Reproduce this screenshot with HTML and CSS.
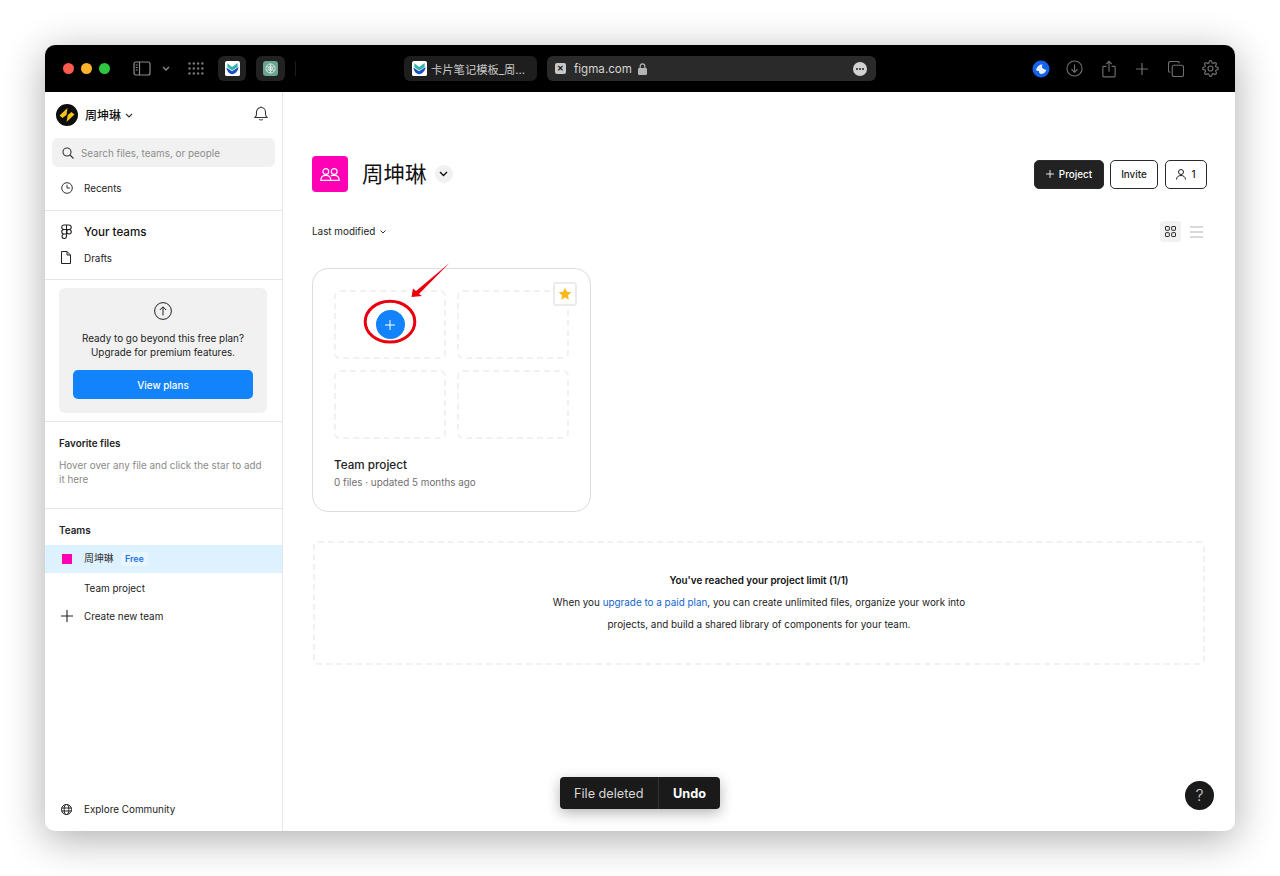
FILE: index.html
```html
<!DOCTYPE html>
<html>
<head>
<meta charset="utf-8">
<title>Figma</title>
<link rel="stylesheet" href="styles.css">
</head>
<body>
<svg class="defs" width="0" height="0">
  <symbol id="applogo" viewBox="0 0 16 16">
    <rect width="16" height="16" rx="2" fill="#fff"/>
    <path d="M2.500 2.500 L7.500 6.500 L13.500 2 V6.500 L7.500 10 L2.500 6.500Z" fill="#2fb6a8"/>
    <path d="M1.500 7 L7.500 11 L14.500 6.500 C14 11 11 14 7.500 14 C4.500 14 2 11 1.500 7Z" fill="#1d4fc4"/>
  </symbol>
</svg>
<div class="window">
  <header class="titlebar">
    <span class="light red"></span><span class="light yellow"></span><span class="light green"></span>
    <svg class="bar-icon sidebar-ico" width="18" height="15" viewBox="0 0 18 15" fill="none" stroke="#8c8c8c" stroke-width="1.2"><rect x="1" y="1" width="16" height="13" rx="2"/><path d="M6.500 1v13M2.700 4h2M2.700 6.500h2M2.700 9h2"/></svg>
    <svg class="bar-icon chev-ico" width="8" height="6" viewBox="0 0 8 6" fill="none" stroke="#8c8c8c" stroke-width="1.3"><path d="M1 1l3 3 3-3"/></svg>
    <svg class="bar-icon dots-ico" width="16" height="13" viewBox="0 0 16 13" fill="#777"><circle cx="1.500" cy="1.500" r="1.200"/><circle cx="5.800" cy="1.500" r="1.200"/><circle cx="10.100" cy="1.500" r="1.200"/><circle cx="14.400" cy="1.500" r="1.200"/><circle cx="1.500" cy="6.500" r="1.200"/><circle cx="5.800" cy="6.500" r="1.200"/><circle cx="10.100" cy="6.500" r="1.200"/><circle cx="14.400" cy="6.500" r="1.200"/><circle cx="1.500" cy="11.500" r="1.200"/><circle cx="5.800" cy="11.500" r="1.200"/><circle cx="10.100" cy="11.500" r="1.200"/><circle cx="14.400" cy="11.500" r="1.200"/></svg>
    <div class="app-tile first"><svg width="15" height="15"><use href="#applogo"/></svg></div>
    <div class="app-tile"><svg width="15" height="15" viewBox="0 0 15 15"><rect width="15" height="15" rx="3" fill="#6aa392"/><g fill="none" stroke="#d6e8e2" stroke-width="1"><circle cx="7.500" cy="7.500" r="4.600"/><circle cx="7.500" cy="7.500" r="2.200"/><path d="M7.500 2.900v4.600M3.500 5.200l4 2.300M3.500 9.800l4-2.300M7.500 12.100V7.500M11.500 9.800l-4-2.300M11.500 5.200l-4 2.300"/></g></svg></div>
    <span class="bar-sep"></span>
    <div class="tab"><svg width="15" height="15"><use href="#applogo"/></svg><span>卡片笔记模板_周...</span></div>
    <div class="address">
      <span class="favicon">✕</span>
      <span class="domain">figma.com</span>
      <svg class="lock" width="9" height="12" viewBox="0 0 9 12"><path d="M2.200 5V3.200a2.300 2.300 0 0 1 4.600 0V5" fill="none" stroke="#b5b5b5" stroke-width="1.200"/><rect y="5" width="9" height="7" rx="1.200" fill="#b5b5b5"/></svg>
      <span class="more"><i></i><i></i><i></i></span>
    </div>
    <div class="bar-right">
      <svg width="18" height="18" viewBox="0 0 18 18"><circle cx="9" cy="9" r="8.500" fill="#1463ec"/><path d="M4 10c1-4 4-6 7-5.500-1.500 1-1.500 2.500 0 4 1 1 2.500 1.500 3.500 1-1 3-3 4.500-5.500 4.500-1 0-2.500-1.500-2-3-1 0-2 0-3-1z" fill="#e8f0fd"/></svg>
      <svg width="17" height="17" viewBox="0 0 18 18" fill="none" stroke="#6f6f6f" stroke-width="1.200"><circle cx="9" cy="9" r="8"/><path d="M9 4.800v8M5.800 9.800L9 13l3.200-3.200"/></svg>
      <svg width="14" height="18" viewBox="0 0 16 20" fill="none" stroke="#6f6f6f" stroke-width="1.300"><path d="M5 7H2a1 1 0 0 0-1 1v10a1 1 0 0 0 1 1h12a1 1 0 0 0 1-1V8a1 1 0 0 0-1-1h-3M8 13V1.500M4.800 4.500L8 1.300l3.200 3.200"/></svg>
      <svg width="14" height="14" viewBox="0 0 14 14" fill="none" stroke="#6f6f6f" stroke-width="1.200"><path d="M7 1v12M1 7h12"/></svg>
      <svg width="16" height="16" viewBox="0 0 17 17" fill="none" stroke="#6f6f6f" stroke-width="1.200"><rect x="4.500" y="4.500" width="12" height="12" rx="2"/><path d="M12 2.500a2 2 0 0 0-2-2H2.500a2 2 0 0 0-2 2V10a2 2 0 0 0 2 2"/></svg>
      <svg width="17" height="17" viewBox="0 0 24 24" fill="none" stroke="#6f6f6f" stroke-width="1.700"><circle cx="12" cy="12" r="3.500"/><path d="M19.400 15a1.650 1.650 0 0 0 .33 1.820l.06.06a2 2 0 1 1-2.830 2.830l-.06-.06a1.650 1.650 0 0 0-2.820 1.170V21a2 2 0 0 1-4 0v-.09a1.650 1.650 0 0 0-2.820-1.170l-.06.06a2 2 0 1 1-2.830-2.830l.06-.06A1.650 1.650 0 0 0 3.090 14H3a2 2 0 0 1 0-4h.09a1.650 1.650 0 0 0 1.170-2.820l-.06-.06a2 2 0 1 1 2.830-2.830l.06.06A1.650 1.650 0 0 0 10 3.090V3a2 2 0 0 1 4 0v.09a1.650 1.650 0 0 0 2.820 1.170l.06-.06a2 2 0 1 1 2.830 2.830l-.06.06A1.650 1.650 0 0 0 20.910 10H21a2 2 0 0 1 0 4h-.09a1.650 1.650 0 0 0-1.510 1z"/></svg>
    </div>
  </header>

  <div class="body">
    <aside class="sidebar">
      <div class="user-row">
        <svg width="22" height="22" viewBox="0 0 22 22"><circle cx="11" cy="11" r="11" fill="#0d0d0d"/><g fill="#f5c518"><path d="M3.500 11.500L11.500 4 10.500 11 6.500 14Z"/><path d="M10.500 18L18.500 10.500 15.500 8 11.800 11Z"/></g></svg>
        <span class="user-name">周坤琳</span>
        <svg width="8" height="5" viewBox="0 0 8 5" fill="none" stroke="#333" stroke-width="1.100"><path d="M1 1l3 3 3-3"/></svg>
        <svg class="bell" width="14" height="15" viewBox="0 0 14 15" fill="none" stroke="#333" stroke-width="1.100"><path d="M1 11.500c1-1 1.500-1.500 1.500-3.500V6a4.500 4.500 0 0 1 9 0v2c0 2 .5 2.500 1.500 3.500zM5.300 13.300c.7 1 2.700 1 3.400 0M7 .5v1"/></svg>
      </div>
      <div class="search">
        <svg width="12" height="12" viewBox="0 0 12 12" fill="none" stroke="#333" stroke-width="1.100"><circle cx="5" cy="5" r="4"/><path d="M8 8l3.500 3.500"/></svg>
        <span>Search files, teams, or people</span>
      </div>
      <a class="nav-row recents">
        <svg class="nav-ico" width="12" height="12" viewBox="0 0 12 12" fill="none" stroke="#333"><circle cx="6" cy="6" r="5.300"/><path d="M6 2.800V6h3"/></svg>
        <span>Recents</span>
      </a>
      <div class="rule"></div>
      <a class="nav-row teams-link">
        <svg class="nav-ico" width="11" height="15" viewBox="0 0 11 15" fill="none" stroke="#222" stroke-width="1.100"><path d="M5.500 1H3a2.250 2.250 0 0 0 0 4.500h2.500zM5.500 1H8a2.250 2.250 0 0 1 0 4.500H5.500zM5.500 5.500H3A2.250 2.250 0 0 0 3 10h2.500zM5.500 10H3a2.250 2.250 0 1 0 2.500 2.250z"/><circle cx="8" cy="7.750" r="2.250"/></svg>
        <span>Your teams</span>
      </a>
      <a class="nav-row drafts">
        <svg class="nav-ico" width="10" height="13" viewBox="0 0 10 13" fill="none" stroke="#222"><path d="M.5.5h5.500l3.500 3.500v8.500h-9zM6 .5V4h3.500"/></svg>
        <span>Drafts</span>
      </a>
      <div class="rule"></div>
      <div class="upgrade">
        <svg width="18" height="18" viewBox="0 0 18 18" fill="none" stroke="#222"><circle cx="9" cy="9" r="8.400"/><path d="M9 13.500V5M5.800 8L9 4.800 12.200 8"/></svg>
        <p>Ready to go beyond this free plan?<br>Upgrade for premium features.</p>
        <button class="view-plans">View plans</button>
      </div>
      <div class="rule"></div>
      <div class="favorites">
        <h4>Favorite files</h4>
        <p>Hover over any file and click the star to add it here</p>
      </div>
      <div class="rule"></div>
      <h4 class="teams-head">Teams</h4>
      <a class="nav-row team-active">
        <span class="pink-dot"></span>
        <span class="cjk">周坤琳</span>
        <span class="free">Free</span>
      </a>
      <a class="nav-row team-sub"><span>Team project</span></a>
      <a class="nav-row create-team">
        <svg class="nav-ico" width="12" height="12" viewBox="0 0 12 12" stroke="#222" stroke-width="1.100"><path d="M6 0v12M0 6h12"/></svg>
        <span>Create new team</span>
      </a>
      <a class="nav-row explore">
        <svg class="nav-ico" width="11" height="11" viewBox="0 0 11 11" fill="none" stroke="#222"><circle cx="5.500" cy="5.500" r="5"/><ellipse cx="5.500" cy="5.500" rx="2.300" ry="5"/><path d="M.5 4h10M.5 7h10"/></svg>
        <span>Explore Community</span>
      </a>
    </aside>

    <main class="content">
      <div class="team-head">
        <div class="team-badge">
          <svg width="20" height="13" viewBox="0 0 20 13" fill="none" stroke="#fff" stroke-width="1.200"><circle cx="5.800" cy="3.500" r="2.900"/><circle cx="14.200" cy="3.500" r="2.900"/><path d="M.8 12.400c0-3 2-5 5-5s5 2 5 5zM10.800 7.700c.9-.3 1.800-.4 3.400-.3 3 0 5 2 5 5h-8.400"/></svg>
        </div>
        <h1>周坤琳</h1>
        <span class="title-chev"><svg width="9" height="6" viewBox="0 0 9 6" fill="none" stroke="#111" stroke-width="1.400"><path d="M1 1l3.500 3.500L8 1"/></svg></span>
        <div class="head-actions">
          <button class="btn dark"><svg width="8" height="8" viewBox="0 0 9 9" stroke="#fff"><path d="M4.500 0v9M0 4.500h9"/></svg>Project</button>
          <button class="btn invite">Invite</button>
          <button class="btn members">
            <svg width="10" height="11" viewBox="0 0 10 11" fill="none" stroke="#222"><circle cx="5" cy="3" r="2.500"/><path d="M.5 10.500c0-2.500 2-4 4.500-4s4.500 1.500 4.500 4"/></svg>1</button>
        </div>
      </div>
      <div class="sort-row">
        <span class="sort">Last modified</span>
        <svg width="6" height="4" viewBox="0 0 6 4" fill="none" stroke="#333"><path d="M.5.500L3 3 5.500.500"/></svg>
        <div class="view-toggle">
          <span class="grid-btn"><svg width="11" height="11" viewBox="0 0 11 11" fill="none" stroke="#222"><rect x=".5" y=".5" width="3.800" height="3.800" rx=".6"/><rect x="6.700" y=".5" width="3.800" height="3.800" rx=".6"/><rect x=".5" y="6.700" width="3.800" height="3.800" rx=".6"/><rect x="6.700" y="6.700" width="3.800" height="3.800" rx=".6"/></svg></span>
          <svg width="13" height="12" viewBox="0 0 13 12" stroke="#b3b3b3"><path d="M0 1h13M0 6h13M0 11h13"/></svg>
        </div>
      </div>

      <section class="project-card">
        <div class="thumbs">
          <div class="thumb"><span class="add"><svg width="10" height="10" viewBox="0 0 10 10" stroke="#fff"><path d="M5 0v10M0 5h10"/></svg></span></div>
          <div class="thumb"></div>
          <div class="thumb"></div>
          <div class="thumb"></div>
        </div>
        <span class="star"><svg width="14" height="14" viewBox="0 0 14 14"><path d="M7 .8l1.900 4 4.400.5-3.300 3 .9 4.400L7 10.500l-3.900 2.200.9-4.400-3.300-3 4.400-.5z" fill="#fbb81c"/></svg></span>
        <svg class="mark" width="112" height="90" viewBox="0 0 112 90" fill="none">
          <ellipse cx="52" cy="58.700" rx="24.800" ry="20.400" stroke="#e8000d" stroke-width="3"/>
          <path d="M111.500 0L81 31 84 33 73.500 34 75 25.500 78 28z" fill="#e8000d"/>
        </svg>
        <div class="card-title">Team project</div>
        <div class="card-meta">0 files · updated 5 months ago</div>
      </section>

      <section class="limit">
        <strong>You've reached your project limit (1/1)</strong>
        <p>When you <a>upgrade to a paid plan</a>, you can create unlimited files, organize your work into<br>projects, and build a shared library of components for your team.</p>
      </section>

      <div class="toast"><span class="toast-msg">File deleted</span><span class="toast-undo">Undo</span></div>
      <div class="help">?</div>
    </main>
  </div>
</div>
</body>
</html>
```

FILE: styles.css
```css
* {
  box-sizing: border-box;
}
html, body {
  margin: 0;
  height: 876px;
  overflow: hidden;
  background: #ffffff;
}
body {
  padding: 45px 45px 45px;
  font-family: Inter, "Noto Sans CJK SC", sans-serif;
  color: #222222;
  font-size: 9.900px;
}
.defs {
  position: absolute;
}
.window {
  width: 1190px;
  height: 786px;
  border-radius: 10px;
  background: #ffffff;
  box-shadow: 0 8px 40px rgba(0, 0, 0, 0.33);
  display: flex;
  flex-direction: column;
  overflow: hidden;
}

/* title bar */
.titlebar {
  height: 47px;
  flex: none;
  background: #000000;
  display: flex;
  align-items: center;
  padding-left: 18px;
}
.light {
  width: 11px;
  height: 11px;
  border-radius: 50%;
  margin-right: 7px;
}
.red { background: #fb5a4f; }
.yellow { background: #fdb22c; }
.green { background: #2dc840; }
.bar-icon { flex: none; }
.sidebar-ico { margin-left: 16px; }
.chev-ico { margin-left: 11px; }
.dots-ico { margin-left: 18px; }
.app-tile {
  width: 29px;
  height: 25px;
  border-radius: 6px;
  background: #222222;
  display: flex;
  align-items: center;
  justify-content: center;
  margin-left: 10px;
}
.app-tile.first {
  width: 28px;
  margin-left: 14px;
}
.bar-sep {
  width: 1px;
  height: 15px;
  background: #1d1d1d;
  margin-left: 10px;
}
.tab {
  width: 133px;
  height: 25px;
  margin-left: 108px;
  border-radius: 6px;
  background: #1e1e1e;
  color: #c8c8c8;
  font-size: 11.300px;
  display: flex;
  align-items: center;
  gap: 4px;
  padding-left: 8px;
}
.address {
  width: 329px;
  height: 25px;
  margin-left: 10px;
  border-radius: 6px;
  background: #2a2a2a;
  color: #d4d4d4;
  font-size: 11.600px;
  display: flex;
  align-items: center;
  padding: 0 9px 0 8px;
}
.favicon {
  width: 11px;
  height: 11px;
  border-radius: 2px;
  background: #c8c8c8;
  color: #111111;
  font-size: 8px;
  font-weight: 700;
  line-height: 11px;
  text-align: center;
}
.domain {
  margin-left: 8px;
}
.lock {
  margin-left: 6px;
}
.more {
  margin-left: auto;
  width: 14px;
  height: 14px;
  border-radius: 50%;
  background: #d2d2d2;
  display: flex;
  align-items: center;
  justify-content: center;
  gap: 1px;
}
.more i {
  width: 2px;
  height: 2px;
  border-radius: 50%;
  background: #222222;
}
.bar-right {
  margin-left: auto;
  width: 203px;
  margin-right: 8px;
  display: grid;
  grid-template-columns: repeat(6, 1fr);
  align-items: center;
  justify-items: center;
}

.body {
  flex: 1;
  display: flex;
  min-height: 0;
}

/* sidebar */
.sidebar {
  width: 238px;
  flex: none;
  border-right: 1px solid #e6e6e6;
  display: flex;
  flex-direction: column;
}
.user-row {
  height: 46px;
  padding: 0 14px 0 11px;
  display: flex;
  align-items: center;
}
.user-name {
  font-size: 12px;
  font-weight: 500;
  margin: -2px 4px 0 7px;
  color: #111111;
}
.bell {
  margin-left: auto;
  margin-top: -3px;
}
.search {
  height: 29px;
  margin: 0 7px;
  background: #f1f1f1;
  border-radius: 6px;
  padding-left: 10px;
  display: flex;
  align-items: center;
  gap: 7px;
  color: #8c8c8c;
}
.search span {
  padding-top: 1px;
}
.nav-row {
  display: flex;
  align-items: center;
  height: 28px;
  padding-left: 16px;
  position: relative;
  color: #222222;
}
.nav-row > span:not(.pink-dot):not(.free) {
  position: absolute;
  left: 39px;
}
.recents {
  margin-top: 7px;
  margin-bottom: 8px;
}
.rule {
  height: 1px;
  flex: none;
  background: #e6e6e6;
}
.teams-link {
  margin-top: 7px;
  height: 27px;
}
.teams-link span {
  font-size: 11.600px;
  font-weight: 500;
  color: #111111;
}
.drafts {
  height: 25px;
  margin-bottom: 9px;
}
.upgrade {
  margin: 8px 15px 8px 14px;
  height: 125px;
  flex: none;
  border-radius: 6px;
  background: #f1f1f1;
  padding-top: 14px;
  text-align: center;
}
.upgrade svg {
  display: block;
  margin: 0 auto;
}
.upgrade p {
  margin: 11px 0 11px;
  line-height: 14px;
}
.view-plans {
  display: block;
  width: 180px;
  height: 29px;
  margin: 0 auto;
  border: 0;
  border-radius: 5px;
  background: #1283fb;
  color: #ffffff;
  font: 500 9.900px Inter, sans-serif;
}
.favorites {
  height: 86px;
  flex: none;
  padding: 14px 14px 0;
}
h4 {
  margin: 0;
  font-size: 9.900px;
  font-weight: 600;
  line-height: 14px;
  color: #222222;
}
.favorites p {
  margin: 8px 0 0;
  line-height: 14px;
  color: #8a8a8a;
}
.teams-head {
  padding: 14px 14px 8px;
  height: 36px;
  flex: none;
}
.team-active {
  background: #def1fe;
  height: 28px;
  margin-bottom: 1px;
}
.pink-dot {
  width: 10px;
  height: 10px;
  margin-left: 1px;
  background: #ff00b4;
}
.team-active .cjk {
  color: #333333;
  margin-top: -2px;
}
.free {
  position: absolute;
  left: 76px;
  padding: 0 4px;
  height: 14px;
  line-height: 14px;
  border-radius: 4px;
  background: #eaf6ff;
  color: #1a73e8;
  font-size: 8.800px;
  font-weight: 600;
}
.team-sub {
  height: 28px;
}
.create-team {
  height: 28px;
}
.explore {
  margin-top: auto;
  margin-bottom: 8px;
}

/* main */
.content {
  flex: 1;
  position: relative;
  padding: 64px 28px 0 29px;
}
.team-head {
  display: flex;
  align-items: center;
  height: 36px;
}
.team-badge {
  width: 36px;
  height: 36px;
  border-radius: 4px;
  background: #ff00b4;
  display: flex;
  align-items: center;
  justify-content: center;
}
h1 {
  margin: -4px 0 0 14px;
  font-size: 21.500px;
  font-weight: 400;
  color: #111111;
}
.title-chev {
  width: 18px;
  height: 18px;
  margin-left: 8px;
  border-radius: 50%;
  background: #f1f1f1;
  display: flex;
  align-items: center;
  justify-content: center;
}
.head-actions {
  margin-left: auto;
  display: flex;
  gap: 6px;
}
.btn {
  height: 29px;
  width: 48px;
  padding: 0;
  border: 1px solid #2b2b2b;
  border-radius: 5px;
  background: #ffffff;
  color: #222222;
  font: 500 9.900px Inter, sans-serif;
  display: flex;
  align-items: center;
  justify-content: center;
  gap: 5px;
}
.btn.dark {
  width: 70px;
  background: #222222;
  color: #ffffff;
}
.btn.members {
  width: 42px;
  margin-left: 1px;
}
.sort-row {
  margin-top: 29px;
  height: 21px;
  display: flex;
  align-items: center;
  gap: 5px;
}
.sort {
  padding-bottom: 1px;
}
.view-toggle {
  margin-left: auto;
  margin-right: 4px;
  display: flex;
  align-items: center;
  gap: 9px;
}
.grid-btn {
  width: 21px;
  height: 21px;
  border-radius: 3px;
  background: #f1f1f1;
  display: flex;
  align-items: center;
  justify-content: center;
}
.project-card {
  position: relative;
  width: 279px;
  height: 244px;
  margin-top: 26px;
  border: 1px solid #dcdcdc;
  border-radius: 16px;
  padding: 21px;
}
.thumbs {
  display: grid;
  grid-template-columns: 112px 112px;
  grid-template-rows: 69px 69px;
  gap: 11px;
}
.thumb {
  border: 2px dashed #f1f1f1;
  border-radius: 6px;
  display: flex;
  align-items: center;
  justify-content: center;
}
.add {
  width: 29px;
  height: 29px;
  border-radius: 50%;
  background: #1283fb;
  display: flex;
  align-items: center;
  justify-content: center;
}
.star {
  position: absolute;
  left: 240px;
  top: 13px;
  width: 24px;
  height: 24px;
  border: 2px solid #ebebeb;
  border-radius: 3px;
  background: #ffffff;
  display: flex;
  align-items: center;
  justify-content: center;
}
.mark {
  position: absolute;
  left: 25px;
  top: -6px;
  overflow: visible;
}
.card-title {
  margin-top: 19px;
  font-size: 11.700px;
  font-weight: 500;
  line-height: 15px;
  color: #222222;
}
.card-meta {
  margin-top: 2px;
  line-height: 14px;
  color: #6f6f6f;
}
.limit {
  width: 892px;
  height: 124px;
  margin: 29px 0 0 1px;
  border: 2px dashed #f1f1f1;
  border-radius: 5px;
  padding-top: 30px;
  text-align: center;
}
.limit strong {
  display: block;
  font-weight: 600;
  line-height: 14px;
  color: #111111;
}
.limit p {
  margin: 4px 0 0;
  line-height: 22px;
}
.limit a {
  color: #0f66d0;
}
.toast {
  position: absolute;
  left: 277px;
  top: 685px;
  width: 160px;
  height: 32px;
  border-radius: 4px;
  background: #1a1a1a;
  box-shadow: 0 4px 14px rgba(0, 0, 0, 0.3);
  display: flex;
  align-items: center;
  font-size: 12.700px;
}
.toast-msg {
  width: 99px;
  height: 100%;
  line-height: 33px;
  padding-left: 14px;
  color: #d8d8d8;
  border-right: 1px solid #333333;
}
.toast-undo {
  flex: 1;
  text-align: center;
  color: #ffffff;
  font-weight: 700;
}
.help {
  position: absolute;
  right: 21px;
  bottom: 21px;
  width: 29px;
  height: 29px;
  border-radius: 50%;
  background: #1a1a1a;
  color: #cccccc;
  font-size: 16px;
  font-weight: 300;
  line-height: 29px;
  text-align: center;
}
```
